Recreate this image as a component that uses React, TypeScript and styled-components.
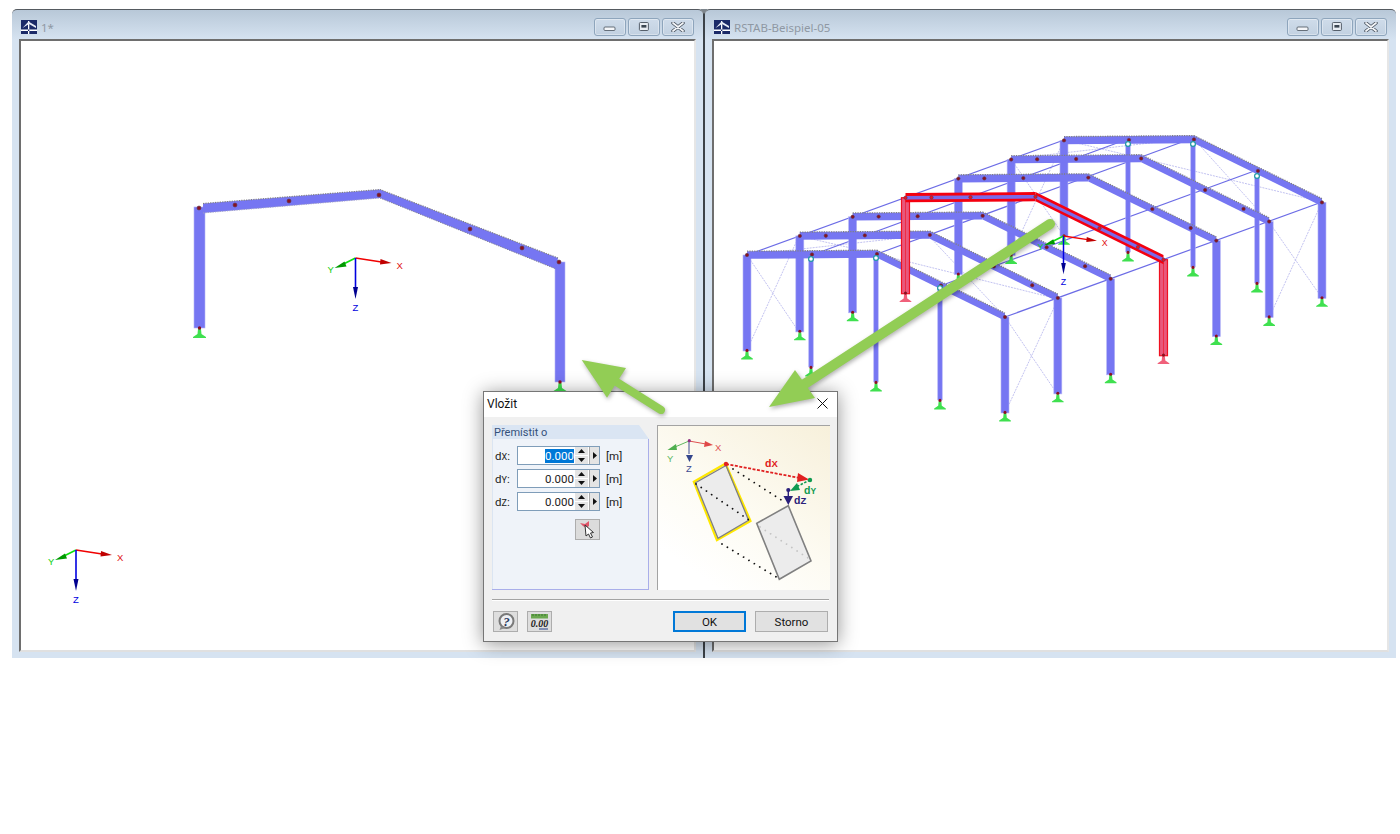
import React from 'react'
import styled, { createGlobalStyle } from 'styled-components'

type Point = [number, number]

const BEAM = '#7676f2'
const UI_FONT = '"Noto Sans", "Open Sans", sans-serif'
const DIALOG_FONT = 'Roboto, "Noto Sans", sans-serif'

const GlobalStyle = createGlobalStyle`
  html, body {
    margin: 0;
    background: #fff;
    font-family: ${UI_FONT};
  }
`

const Page = styled.div`
  position: relative;
  width: 1400px;
  height: 834px;
  padding: 9px 4px 0 12px;
  box-sizing: border-box;
  overflow: hidden;
`

const Workspace = styled.div`
  display: flex;
  height: 649px;
`

const Splitter = styled.div`
  position: relative;
  width: 2px;
  background: #3c4248;

  &::before {
    content: '';
    position: absolute;
    top: 0;
    left: -3px;
    border: solid transparent;
    border-width: 5px 4px 0;
    border-top-color: #7d858c;
  }
`

const Window = styled.section`
  flex: 1;
  display: flex;
  flex-direction: column;
  min-width: 0;
  padding: 0 7px 6px;
  border-top: 1px solid #555a60;
  border-radius: 5px 5px 0 0;
  background: linear-gradient(#b8c8d8 0, #d6e3f1 30px, #d6e3f1 100%);
`

const TitleBar = styled.header`
  display: flex;
  align-items: center;
  height: 29px;
  flex: none;
  box-sizing: border-box;
  padding: 5px 0 0 2px;
`

const WindowTitle = styled.span`
  margin-left: 4px;
  flex: 1;
  font-size: 11.5px;
  color: #8f98a3;
`

const Controls = styled.div`
  display: flex;
  gap: 2px;
  margin-right: 2px;
`

const ControlButton = styled.button`
  display: flex;
  align-items: center;
  justify-content: center;
  width: 32px;
  height: 18px;
  padding: 0;
  border: 1px solid #8ea5bc;
  border-radius: 3px;
  background: linear-gradient(#cfdcea, #c2d1e1);
  box-shadow: inset 0 0 0 1px rgba(255, 255, 255, 0.35);
`

const Client = styled.div`
  flex: 1;
  min-height: 0;
  border: 2px solid;
  border-color: #6e6e6e #e6e6e6 #e0e0e0 #6e6e6e;
  background: #fff;
`

const Canvas = styled.svg`
  display: block;
  width: 100%;
  height: 100%;
`

const ArrowLayer = styled.svg`
  position: absolute;
  inset: 0;
  width: 1400px;
  height: 834px;
  pointer-events: none;
  filter: drop-shadow(1px 2px 2px rgba(0, 0, 0, 0.3));
`

const Dialog = styled.div`
  position: absolute;
  left: 483px;
  top: 391px;
  width: 355px;
  height: 251px;
  box-sizing: border-box;
  display: flex;
  flex-direction: column;
  border: 1px solid #767676;
  background: #f0f0f0;
  box-shadow: 0 2px 18px rgba(0, 0, 0, 0.42);
  font-family: ${DIALOG_FONT};
`

const DialogTitle = styled.div`
  display: flex;
  align-items: center;
  justify-content: space-between;
  height: 25px;
  flex: none;
  box-sizing: border-box;
  padding: 0 9px 2px 3px;
  background: #fff;
  font-size: 12px;
  color: #111;
`

const DialogBody = styled.div`
  display: grid;
  grid-template-columns: 157px 173px;
  gap: 8px;
  padding: 8px 0 0 8px;
`

const Panel = styled.div`
  height: 165px;
  display: flex;
  flex-direction: column;
`

const PanelHeader = styled.div`
  height: 14px;
  flex: none;
  padding-left: 2px;
  background: #dae5f3;
  clip-path: polygon(0 0, calc(100% - 10px) 0, 100% 100%, 0 100%);
  font-size: 11px;
  line-height: 16px;
  color: #34507a;
`

const PanelContent = styled.div`
  flex: 1;
  display: flex;
  flex-direction: column;
  gap: 4px;
  padding: 7px 0 0 3px;
  background: #eff3f9;
  border: solid #a9aeea;
  border-width: 0 1px 1px 0;
  box-shadow: inset 1px 0 0 #dbe5f2;
`

const FieldRow = styled.div`
  display: flex;
  align-items: center;
  height: 19px;
  font-size: 11.5px;
  color: #222;
`

const FieldLabel = styled.span`
  width: 22px;
`

const SmallCap = styled.span`
  font-size: 9px;
`

const SpinField = styled.div`
  display: flex;
  align-items: stretch;
  width: 83px;
  height: 19px;
  box-sizing: border-box;
  border: 1px solid #7f9db9;
  background: #fff;
`

const ValueCell = styled.div`
  flex: 1;
  display: flex;
  justify-content: flex-end;
  align-items: center;
  padding-right: 1px;
`

const Value = styled.span<{ $selected?: boolean }>`
  line-height: 14px;
  background: ${(p) => (p.$selected ? '#0078d7' : 'transparent')};
  color: ${(p) => (p.$selected ? '#fff' : '#222')};
`

const SpinButtons = styled.div`
  width: 13px;
  display: flex;
  flex-direction: column;
  gap: 1px;
  margin-right: 1px;
`

const SpinPart = styled.div`
  flex: 1;
  background: #e4e4e4;
  display: flex;
  align-items: center;
  justify-content: center;
`

const NextButton = styled.div`
  width: 9px;
  background: #e4e4e4;
  border-left: 1px solid #a8a8a8;
  display: flex;
  align-items: center;
  justify-content: center;
`

const Unit = styled.span`
  margin-left: 6px;
`

const PickButton = styled.button`
  align-self: flex-start;
  margin: 4px 0 0 80px;
  width: 25px;
  height: 21px;
  padding: 0;
  border: 1px solid #adadad;
  background: #dcdcdc;
  display: flex;
  align-items: center;
  justify-content: center;
`

const Preview = styled.div`
  height: 165px;
  box-sizing: border-box;
  border: solid #a3a3a3;
  border-width: 1px 0 0 1px;
  background: linear-gradient(215deg, #f7f0db 0, #fdfbf2 50%, #ffffff 85%);
`

const Separator = styled.div`
  height: 1px;
  margin: 9px 8px 0;
  background: #a3a3a3;
  box-shadow: 0 1px 0 #fff;
`

const Footer = styled.div`
  display: flex;
  align-items: center;
  gap: 9px;
  padding: 11px 9px 0;
`

const IconButton = styled.button`
  width: 25px;
  height: 21px;
  padding: 0;
  border: 1px solid #adadad;
  background: #dedede;
  display: flex;
  align-items: center;
  justify-content: center;
`

const Spacer = styled.div`
  flex: 1;
`

const ActionButton = styled.button<{ $primary?: boolean }>`
  width: 73px;
  height: 21px;
  box-sizing: border-box;
  padding: 0;
  border: ${(p) => (p.$primary ? '2px solid #0078d7' : '1px solid #adadad')};
  background: #e1e1e1;
  font-family: inherit;
  font-size: 11.5px;
  color: #111;
`

const at = (a: Point, b: Point, t: number): Point => [a[0] + (b[0] - a[0]) * t, a[1] + (b[1] - a[1]) * t]
const shift = (p: Point, i: number): Point => [p[0] + i * 52.83, p[1] - i * 19.1]
const Line = (a: Point, b: Point, stroke: string, width: number, dash?: string) => (
  <line x1={a[0]} y1={a[1]} x2={b[0]} y2={b[1]} stroke={stroke} strokeWidth={width} strokeDasharray={dash} />
)
const Dots = (a: Point, b: Point, color: string) => (
  <line x1={a[0]} y1={a[1]} x2={b[0]} y2={b[1]} stroke={color} strokeWidth={1.8} strokeDasharray="0.01 6.3" strokeLinecap="round" />
)

const Knot = ({ p, r = 1.7, color = '#8a1020' }: { p: Point; r?: number; color?: string }) => (
  <circle cx={p[0]} cy={p[1]} r={r} fill={color} stroke="#5a3a4a" strokeWidth={0.6} />
)

const Hinge = ({ p }: { p: Point }) => <circle cx={p[0]} cy={p[1]} r={2.4} fill="#fff" stroke="#1f9aa5" strokeWidth={1.2} />

const Support = ({ x, y, size = 1, color = '#3fe04f' }: { x: number; y: number; size?: number; color?: string }) => (
  <g transform={`translate(${x} ${y}) scale(${size})`}>
    <path d="M-1.5 -3 H1.5 L2 2 L6.5 5 V6 H-6.5 V5 L-2 2 Z" fill={color} />
    <circle cx={0} cy={-4} r={1.7} fill="#8a1020" />
  </g>
)

const Axes = ({ x, y, size = 1 }: { x: number; y: number; size?: number }) => (
  <g transform={`translate(${x} ${y}) scale(${size})`} fontFamily='"Liberation Sans", sans-serif' fontSize={9.5}>
    <line x1={0} y1={0} x2={26} y2={4} stroke="#f00000" strokeWidth={1.4} />
    <polygon points="25,1 36,5 24.5,6.5" fill="#c00000" />
    <line x1={0} y1={0} x2={-14} y2={7} stroke="#10e010" strokeWidth={1.6} />
    <polygon points="-11,3.5 -21,10 -9,8.5" fill="#009a00" />
    <line x1={0} y1={0} x2={0} y2={32} stroke="#0000e0" strokeWidth={1.6} />
    <polygon points="-2.5,29 2.5,29 0,41" fill="#000090" />
    <text x={41} y={10.5} fill="#e01010">X</text>
    <text x={-28} y={15} fill="#10d010">Y</text>
    <text x={-3} y={52.5} fill="#0000e0">Z</text>
  </g>
)

const frameBase: { eaveL: Point; ridge: Point; eaveR: Point } = {
  eaveL: [747, 255],
  ridge: [877, 254],
  eaveR: [1005, 317],
}

const Column = ({ top, width, height, selected }: { top: Point; width: number; height: number; selected?: boolean }) => (
  <g>
    <rect
      x={top[0] - width / 2}
      y={top[1]}
      width={width}
      height={height}
      fill={selected ? '#e8587c' : BEAM}
      stroke={selected ? '#f01020' : '#b4b4f6'}
      strokeWidth={selected ? 1.2 : 0.6}
    />
    {selected && Line([top[0], top[1]], [top[0], top[1] + height], '#f01020', 0.6)}
  </g>
)

const band = (a: Point, b: Point, half: number) =>
  `${a[0]},${a[1] - half} ${b[0]},${b[1] - half} ${b[0]},${b[1] + half} ${a[0]},${a[1] + half}`

const Rafter = ({ a, b, selected }: { a: Point; b: Point; selected?: boolean }) =>
  selected ? (
    <g>
      <polygon points={band(a, b, 4.6)} fill="#f40010" />
      <polygon points={band(a, b, 1.8)} fill="#7a6ae8" />
    </g>
  ) : (
    <g>
      <polygon points={band(a, b, 3.8)} fill={BEAM} />
      {Line([a[0], a[1] - 3.8], [b[0], b[1] - 3.8], '#808080', 1.3, '1.2 1.2')}
    </g>
  )

const Frame = ({ index, selected }: { index: number; selected?: boolean }) => {
  const eaveL = shift(frameBase.eaveL, index)
  const ridge = shift(frameBase.ridge, index)
  const eaveR = shift(frameBase.eaveR, index)
  const end = index === 0 || index === 6
  const knots = end
    ? [at(eaveL, ridge, 0.5), at(ridge, eaveR, 0.5)]
    : [at(eaveL, ridge, 0.2), at(eaveL, ridge, 0.5), at(ridge, eaveR, 0.5), at(ridge, eaveR, 0.8)]
  const knotColor = selected ? '#f01020' : '#8a1020'
  const footColor = selected ? '#f0607a' : '#3fe04f'
  return (
    <g>
      <Column top={eaveL} width={8} height={96} selected={selected} />
      <Column top={eaveR} width={8} height={96} selected={selected} />
      <Rafter a={eaveL} b={ridge} selected={selected} />
      <Rafter a={ridge} b={eaveR} selected={selected} />
      {knots.map((p, i) => (
        <Knot key={i} p={p} color={knotColor} />
      ))}
      <Knot p={eaveL} color={knotColor} />
      <Knot p={ridge} color={knotColor} />
      <Knot p={eaveR} color={knotColor} />
      <Support x={eaveL[0]} y={eaveL[1] + 99} size={0.9} color={footColor} />
      <Support x={eaveR[0]} y={eaveR[1] + 99} size={0.9} color={footColor} />
    </g>
  )
}

const endColumns: { top: Point; height: number }[] = [
  { top: [811, 259], height: 108 },
  { top: [876, 258], height: 124 },
  { top: [940, 288], height: 112 },
  { top: [1128, 144], height: 108 },
  { top: [1193, 144], height: 123 },
  { top: [1257, 176], height: 107 },
]

const purlins: [Point, Point][] = [
  [[747, 255], [1064, 140]],
  [[812, 255], [1128, 139]],
  [[877, 254], [1193, 138]],
  [[940, 286], [1257, 170]],
  [[1005, 317], [1322, 202]],
]

const bracing: [Point, Point][] = [
  [[747, 255], [799, 332]],
  [[799, 236], [747, 350]],
  [[1005, 317], [1058, 395]],
  [[1058, 299], [1005, 413]],
  [[1269, 222], [1322, 298]],
  [[1322, 202], [1269, 318]],
  [[1011, 159], [1064, 236]],
  [[1064, 140], [1011, 255]],
  [[877, 254], [1058, 299]],
  [[928, 235], [1005, 317]],
  [[747, 255], [928, 235]],
  [[799, 236], [877, 254]],
  [[1064, 140], [1140, 158]],
  [[1011, 159], [1193, 138]],
  [[1140, 158], [1322, 202]],
  [[1193, 138], [1269, 222]],
]

const HallModel = () => (
  <Canvas viewBox="714 41 673 609">
    {bracing.map(([a, b], i) => (
      <g key={i}>{Line(a, b, '#b2b2ec', 0.8, '2 1')}</g>
    ))}
    {purlins.map(([a, b], i) => (
      <g key={i}>{Line(a, b, '#6c6ce6', 1.2)}</g>
    ))}
    {endColumns.map((c, i) => (
      <g key={i}>
        <Column top={c.top} width={4.5} height={c.height} />
        <Support x={c.top[0]} y={c.top[1] + c.height + 4} size={0.9} />
      </g>
    ))}
    {[6, 5, 4, 2, 1, 0].map((i) => (
      <Frame key={i} index={i} />
    ))}
    {endColumns.map((c, i) => (
      <Hinge key={i} p={c.top} />
    ))}
    <Frame index={3} selected />
    <Axes x={1063.5} y={236} size={0.93} />
  </Canvas>
)

const SingleFrame = () => (
  <Canvas viewBox="21 41 673 609">
    <rect x={194} y={207} width={11} height={121} fill={BEAM} stroke="#b4b4f6" strokeWidth={0.6} />
    <rect x={555} y={262} width={10} height={120} fill={BEAM} stroke="#b4b4f6" strokeWidth={0.6} />
    <polygon points="203,203.5 380,189.5 380,198 203,213" fill={BEAM} />
    <polygon points="380,189.5 558,258 556,269 380,198" fill={BEAM} />
    {Line([203, 203.5], [380, 189.5], '#808080', 1.2, '1.2 1.2')}
    {Line([380, 189.5], [558, 258], '#808080', 1.2, '1.2 1.2')}
    {Line([203, 213], [380, 198], '#a0a0c0', 0.9, '1.2 1.2')}
    {Line([380, 198], [556, 269], '#808090', 1, '1.2 1.2')}
    {([[199, 208], [235, 205], [289, 201], [379, 195], [470, 229], [522, 248], [559, 262]] as Point[]).map((p, i) => (
      <Knot key={i} p={p} r={2} />
    ))}
    <Support x={199.5} y={332} />
    <Support x={560} y={386} />
    <Axes x={355.5} y={258} />
    <Axes x={76} y={550} />
  </Canvas>
)

const AppIcon = () => (
  <svg width="16" height="14" viewBox="0 0 16 14">
    <rect width="16" height="14" fill="#1b2a68" />
    <path d="M0 9.5 H16 V11 H0 Z M7 1 V14 H8.3 V1 Z" fill="#fff" />
    <path d="M1.5 8 L7.5 1.5 L15 6 L15 8 L8 4 Z" fill="#e8ecf6" />
  </svg>
)

const ControlGlyph = ({ kind }: { kind: 'min' | 'max' | 'close' }) => (
  <svg width="14" height="10" viewBox="0 0 14 10">
    {kind === 'min' && <rect x="1" y="5" width="11" height="3.5" rx="1" fill="#f4f6f9" stroke="#46505c" strokeWidth="0.8" />}
    {kind === 'max' && (
      <g>
        <rect x="2.4" y="0.5" width="9" height="8" rx="1" fill="#e8edf3" stroke="#46505c" strokeWidth="0.9" />
        <rect x="4.4" y="3" width="5" height="2.6" fill="#3b4652" />
      </g>
    )}
    {kind === 'close' && (
      <g>
        <path d="M2 1 L12 9 M12 1 L2 9" stroke="#46505c" strokeWidth="3.4" strokeLinecap="round" />
        <path d="M2 1 L12 9 M12 1 L2 9" stroke="#f4f6f9" strokeWidth="1.8" strokeLinecap="round" />
      </g>
    )}
  </svg>
)

const WindowControls = () => (
  <Controls>
    <ControlButton><ControlGlyph kind="min" /></ControlButton>
    <ControlButton><ControlGlyph kind="max" /></ControlButton>
    <ControlButton><ControlGlyph kind="close" /></ControlButton>
  </Controls>
)

const CloseCross = () => (
  <svg width="11" height="11" viewBox="0 0 11 11">
    <path d="M0.5 0.5 L10.5 10.5 M10.5 0.5 L0.5 10.5" stroke="#111" strokeWidth="1" />
  </svg>
)

const Triangle = ({ down }: { down?: boolean }) => (
  <svg width="7" height="4" viewBox="0 0 7 4">
    <polygon points={down ? '0,0 7,0 3.5,4' : '3.5,0 7,4 0,4'} fill="#111" />
  </svg>
)

const NumberField = ({ label, selected }: { label: string; selected?: boolean }) => (
  <FieldRow>
    <FieldLabel>d<SmallCap>{label}</SmallCap>:</FieldLabel>
    <SpinField>
      <ValueCell><Value $selected={selected}>0.000</Value></ValueCell>
      <SpinButtons>
        <SpinPart><Triangle /></SpinPart>
        <SpinPart><Triangle down /></SpinPart>
      </SpinButtons>
      <NextButton>
        <svg width="4" height="7" viewBox="0 0 4 7"><polygon points="0,0 4,3.5 0,7" fill="#111" /></svg>
      </NextButton>
    </SpinField>
    <Unit>[m]</Unit>
  </FieldRow>
)

const PickIcon = () => (
  <svg width="19" height="19" viewBox="0 0 19 19">
    <path d="M2 3 L7 4 L11 1 L11 6 L8 8 L5 6 Z" fill="#e0566a" />
    <path d="M7 5 L8 16 L10.5 14 L12.5 18 L14.5 17 L12.5 13 L15.5 12.5 Z" fill="#fff" stroke="#333" strokeWidth="1" />
  </svg>
)

const HelpIcon = () => (
  <svg width="20" height="18" viewBox="0 0 20 18">
    <circle cx="10.5" cy="8" r="7" fill="#eef0f4" stroke="#7a7a7a" strokeWidth="2" />
    <path d="M5 13 L3.5 17 L9 15 Z" fill="#8a8a8a" />
    <text x="10.5" y="12.5" textAnchor="middle" fontSize="13" fontWeight="700" fontStyle="italic" fontFamily='"Liberation Serif", serif' fill="#26365c">?</text>
  </svg>
)

const UnitsIcon = () => (
  <svg width="19" height="18" viewBox="0 0 19 18">
    <rect x="1" y="1" width="17" height="4.5" fill="#6aa84f" />
    <path d="M3 1 V3 M6 1 V3 M9 1 V3 M12 1 V3 M15 1 V3" stroke="#2f6a2a" strokeWidth="0.8" />
    <text x="9.5" y="14" textAnchor="middle" fontSize="10" fontStyle="italic" fontWeight="700" fontFamily='"Liberation Serif", serif' fill="#222">0.00</text>
    <path d="M9 16 H18" stroke="#24408a" strokeWidth="1" />
  </svg>
)

const PreviewSketch = () => (
  <Canvas viewBox="658 426 172 164">
    <line x1="689" y1="441" x2="706" y2="444" stroke="#e05050" />
    <line x1="689" y1="441" x2="675" y2="447" stroke="#60b860" />
    <line x1="689" y1="441" x2="689" y2="454" stroke="#3c4c94" />
    <circle cx="689.3" cy="440.7" r="1.6" fill="#903080" />
    <polygon points="705,441 713,445 704,447" fill="#e04848" />
    <polygon points="667.5,450 676,444 677,450" fill="#50b050" />
    <polygon points="686,455 693,455 689.5,462" fill="#34468c" />
    <g fontFamily='"Liberation Sans", sans-serif' fontSize="9.5">
      <text x="715" y="451" fill="#e05050">X</text>
      <text x="667" y="461.5" fill="#60b860">Y</text>
      <text x="686" y="472" fill="#3c4c94">Z</text>
    </g>
    <polygon points="725.6,463.5 693.8,481.8 716.9,540.2 750.5,521" fill="#ececec" stroke="#ffe800" strokeWidth="2.2" />
    <polygon points="726,465.5 695.5,482.8 718,538.2 748.6,520.3" fill="none" stroke="#808080" strokeWidth="1.3" />
    <polygon points="788.3,505.7 756.7,523.3 779.3,579.3 811,561" fill="#ececec" stroke="#808080" strokeWidth="1.6" />
    {Dots([733, 469], [786, 503], '#111')}
    {Dots([696, 484], [752, 522], '#111')}
    {Dots([760, 527], [808, 558], '#c4c4c4')}
    {Dots([722, 544], [778, 578], '#111')}
    {Line([726, 464], [800, 478], '#e02020', 1.8, '3 1.5')}
    <circle cx="726" cy="464" r="2.2" fill="#e02020" />
    <polygon points="798,473 809,479.5 797,482" fill="#e02020" />
    {Line([810, 480], [796, 487], '#0f9a50', 1.6, '2.5 1.5')}
    <circle cx="810" cy="480" r="2.2" fill="#0f9a50" />
    <polygon points="790,491 797,483 800,490" fill="#0f9a50" />
    {Line([788.3, 490], [788.3, 497], '#2a1f7a', 1.4)}
    <circle cx="788.3" cy="490" r="2.1" fill="#2a1f7a" />
    <polygon points="783.5,496 793,496 788.3,505" fill="#2a1f7a" />
    <g fontFamily='"Liberation Sans", sans-serif' fontSize="10.5" fontWeight="700">
      <text x="765" y="467" fill="#e02020">d<tspan fontSize="9.5">X</tspan></text>
      <text x="804" y="494" fill="#0f9a50">d<tspan fontSize="8.5">Y</tspan></text>
      <text x="794" y="504" fill="#2a1f7a">d<tspan fontSize="9.5">Z</tspan></text>
    </g>
  </Canvas>
)

export default function App() {
  return (
    <Page>
      <GlobalStyle />
      <Workspace>
        <Window>
          <TitleBar>
            <AppIcon />
            <WindowTitle>1*</WindowTitle>
            <WindowControls />
          </TitleBar>
          <Client><SingleFrame /></Client>
        </Window>
        <Splitter />
        <Window>
          <TitleBar>
            <AppIcon />
            <WindowTitle>RSTAB-Beispiel-05</WindowTitle>
            <WindowControls />
          </TitleBar>
          <Client><HallModel /></Client>
        </Window>
      </Workspace>

      <Dialog>
        <DialogTitle>
          <span>Vložit</span>
          <CloseCross />
        </DialogTitle>
        <DialogBody>
          <Panel>
            <PanelHeader>Přemístit o</PanelHeader>
            <PanelContent>
              <NumberField label="X" selected />
              <NumberField label="Y" />
              <NumberField label="Z" />
              <PickButton><PickIcon /></PickButton>
            </PanelContent>
          </Panel>
          <Preview><PreviewSketch /></Preview>
        </DialogBody>
        <Separator />
        <Footer>
          <IconButton><HelpIcon /></IconButton>
          <IconButton><UnitsIcon /></IconButton>
          <Spacer />
          <ActionButton $primary>OK</ActionButton>
          <ActionButton>Storno</ActionButton>
        </Footer>
      </Dialog>

      <ArrowLayer viewBox="0 0 1400 834">
        <g fill="#92cd55" stroke="#92cd55" strokeLinecap="round">
          <line x1="661" y1="410" x2="615" y2="381" strokeWidth="8" />
          <polygon points="581.7,360 626,368 607,397.7" stroke="none" />
          <line x1="1050" y1="224" x2="803" y2="385" strokeWidth="10" />
          <polygon points="769,407 795,370 815,398" stroke="none" />
        </g>
      </ArrowLayer>
    </Page>
  )
}
